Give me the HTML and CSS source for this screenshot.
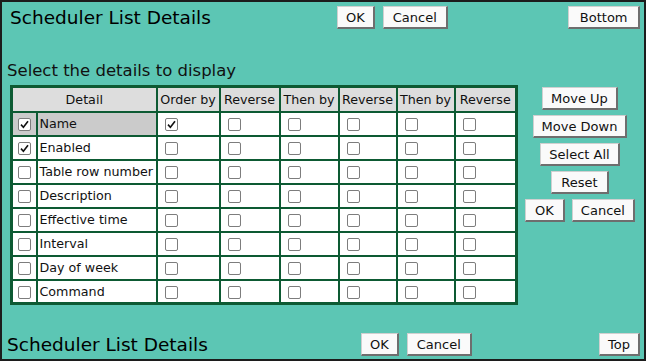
FILE: index.html
```html
<!DOCTYPE html>
<html>
<head>
<meta charset="utf-8">
<link rel="stylesheet" href="styles.css">
</head>
<body>
<div class="page">
  <div class="bar bar-top">
    <div class="title title-top">Scheduler List Details</div>
    <button class="btn">OK</button>
    <button class="btn gap wide">Cancel</button>
    <button class="btn push wider">Bottom</button>
  </div>

  <div class="label">Select the details to display</div>

  <div class="main">
    <table class="grid">
      <colgroup>
        <col class="c1"><col class="c2"><col class="c3"><col class="c4"><col class="c5"><col class="c6"><col class="c7"><col class="c8">
      </colgroup>
      <tr class="head">
        <th colspan="2">Detail</th><th>Order by</th><th>Reverse</th><th>Then by</th><th>Reverse</th><th>Then by</th><th>Reverse</th>
      </tr>
      <tr class="sel">
        <td class="cb hl"><span class="box"><svg viewBox="0 0 13 13" width="13" height="13"><path d="M3 6.6 L5.4 9.2 L10 3.2" fill="none" stroke="#111" stroke-width="1.6"/></svg></span></td>
        <td class="name hl">Name</td>
        <td class="opt"><span class="box"><svg viewBox="0 0 13 13" width="13" height="13"><path d="M3 6.6 L5.4 9.2 L10 3.2" fill="none" stroke="#111" stroke-width="1.6"/></svg></span></td>
        <td class="opt"><span class="box"></span></td><td class="opt"><span class="box"></span></td><td class="opt"><span class="box"></span></td><td class="opt"><span class="box"></span></td><td class="opt"><span class="box"></span></td>
      </tr>
      <tr>
        <td class="cb"><span class="box"><svg viewBox="0 0 13 13" width="13" height="13"><path d="M3 6.6 L5.4 9.2 L10 3.2" fill="none" stroke="#111" stroke-width="1.6"/></svg></span></td>
        <td class="name">Enabled</td>
        <td class="opt"><span class="box"></span></td><td class="opt"><span class="box"></span></td><td class="opt"><span class="box"></span></td><td class="opt"><span class="box"></span></td><td class="opt"><span class="box"></span></td><td class="opt"><span class="box"></span></td>
      </tr>
      <tr>
        <td class="cb"><span class="box"></span></td>
        <td class="name">Table row number</td>
        <td class="opt"><span class="box"></span></td><td class="opt"><span class="box"></span></td><td class="opt"><span class="box"></span></td><td class="opt"><span class="box"></span></td><td class="opt"><span class="box"></span></td><td class="opt"><span class="box"></span></td>
      </tr>
      <tr>
        <td class="cb"><span class="box"></span></td>
        <td class="name">Description</td>
        <td class="opt"><span class="box"></span></td><td class="opt"><span class="box"></span></td><td class="opt"><span class="box"></span></td><td class="opt"><span class="box"></span></td><td class="opt"><span class="box"></span></td><td class="opt"><span class="box"></span></td>
      </tr>
      <tr>
        <td class="cb"><span class="box"></span></td>
        <td class="name">Effective time</td>
        <td class="opt"><span class="box"></span></td><td class="opt"><span class="box"></span></td><td class="opt"><span class="box"></span></td><td class="opt"><span class="box"></span></td><td class="opt"><span class="box"></span></td><td class="opt"><span class="box"></span></td>
      </tr>
      <tr>
        <td class="cb"><span class="box"></span></td>
        <td class="name">Interval</td>
        <td class="opt"><span class="box"></span></td><td class="opt"><span class="box"></span></td><td class="opt"><span class="box"></span></td><td class="opt"><span class="box"></span></td><td class="opt"><span class="box"></span></td><td class="opt"><span class="box"></span></td>
      </tr>
      <tr>
        <td class="cb"><span class="box"></span></td>
        <td class="name">Day of week</td>
        <td class="opt"><span class="box"></span></td><td class="opt"><span class="box"></span></td><td class="opt"><span class="box"></span></td><td class="opt"><span class="box"></span></td><td class="opt"><span class="box"></span></td><td class="opt"><span class="box"></span></td>
      </tr>
      <tr>
        <td class="cb"><span class="box"></span></td>
        <td class="name">Command</td>
        <td class="opt"><span class="box"></span></td><td class="opt"><span class="box"></span></td><td class="opt"><span class="box"></span></td><td class="opt"><span class="box"></span></td><td class="opt"><span class="box"></span></td><td class="opt"><span class="box"></span></td>
      </tr>
    </table>

    <div class="side">
      <button class="btn">Move Up</button>
      <button class="btn">Move Down</button>
      <button class="btn">Select All</button>
      <button class="btn wide">Reset</button>
      <div class="pair">
        <button class="btn wide">OK</button>
        <button class="btn">Cancel</button>
      </div>
    </div>
  </div>

  <div class="bar bar-bottom">
    <div class="title title-bottom">Scheduler List Details</div>
    <button class="btn">OK</button>
    <button class="btn gap wide">Cancel</button>
    <button class="btn push">Top</button>
  </div>
</div>
</body>
</html>
```

FILE: styles.css
```css
html, body {
  margin: 0;
  padding: 0;
}
body {
  font-family: "DejaVu Sans", Verdana, sans-serif;
  color: #111;
}
.page {
  width: 646px;
  height: 361px;
  box-sizing: border-box;
  border: 2px solid #1c1c1c;
  background: #5cc6b4;
  display: flex;
  flex-direction: column;
}
.bar {
  display: flex;
  align-items: center;
  padding-right: 4px;
}
.bar-top {
  padding-top: 4px;
}
.bar-bottom {
  margin-top: auto;
  padding-bottom: 3px;
}
.title {
  font-size: 18.5px;
  line-height: 23px;
  color: #000;
  box-sizing: border-box;
}
.title-top {
  width: 335px;
  padding-left: 8px;
}
.title-bottom {
  width: 359px;
  padding-left: 5px;
}
.btn {
  font-family: "DejaVu Sans", Verdana, sans-serif;
  font-size: 13px;
  color: #111;
  height: 23px;
  padding: 0 8px;
  margin: 0;
  background: #fafafa;
  border-style: solid;
  border-width: 1px 2px 2px 1px;
  border-color: #d0d0d0 #6e6e6e #6e6e6e #d0d0d0;
  border-radius: 0;
  line-height: 19px;
}
.wide {
  padding: 0 9px;
}
.wider {
  padding: 0 10.5px;
}
.gap {
  margin-left: 8px;
}
.push {
  margin-left: auto;
}
.label {
  font-size: 16.5px;
  line-height: 20px;
  margin: 32px 0 4px 5px;
  color: #111;
}
.main {
  display: flex;
  align-items: flex-start;
}
.grid {
  margin-left: 8px;
  border-collapse: collapse;
  table-layout: fixed;
  width: 505px;
  border: 3px solid #0d5a33;
  font-size: 12.7px;
  background: #fff;
}
.c1 { width: 25px; }
.c2 { width: 120px; }
.c3 { width: 63px; }
.c4 { width: 60px; }
.c5 { width: 59px; }
.c6 { width: 58px; }
.c7 { width: 58px; }
.c8 { width: 62px; }
.grid tr {
  height: 24px;
}
.grid tr.head {
  height: 25px;
}
.grid th, .grid td {
  border: 2px solid #0d5a33;
  padding: 0;
  white-space: nowrap;
  overflow: hidden;
}
.grid th {
  background: #dddddd;
  font-weight: normal;
  text-align: center;
}
.grid td.cb {
  text-align: center;
}
.grid td.name {
  padding-left: 2px;
}
.grid td.opt {
  padding-left: 7px;
}
.grid td.hl {
  background: #cbcbcb;
}
.box {
  display: inline-block;
  width: 11px;
  height: 11px;
  border: 1px solid #7d7d7d;
  border-radius: 2px;
  background: #fff;
  vertical-align: middle;
  position: relative;
}
.box svg {
  position: absolute;
  left: -1px;
  top: -1px;
}
.side {
  flex: 1;
  margin-right: 2px;
  display: flex;
  flex-direction: column;
  align-items: center;
  gap: 5px;
  padding-top: 2px;
}
.pair {
  display: flex;
  gap: 7px;
}
```
